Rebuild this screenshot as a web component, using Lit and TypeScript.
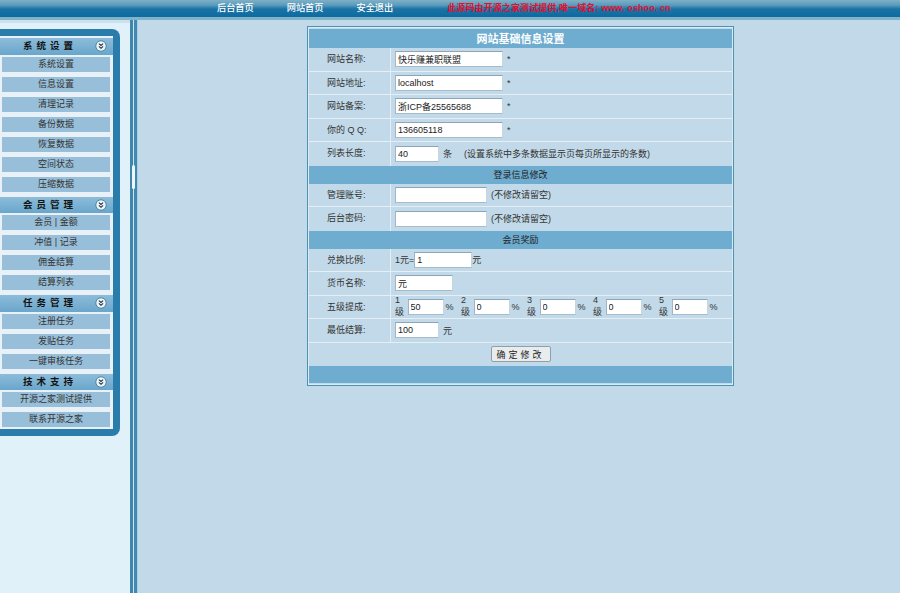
import { LitElement, html, css } from "lit";
import { customElement } from "lit/decorators.js";

const MENU: [string, string[]][] = [
  ["系统设置", ["系统设置", "信息设置", "清理记录", "备份数据", "恢复数据", "空间状态", "压缩数据"]],
  ["会员管理", ["会员 | 金额", "冲值 | 记录", "佣金结算", "结算列表"]],
  ["任务管理", ["注册任务", "发贴任务", "一键审核任务"]],
  ["技术支持", ["开源之家测试提供", "联系开源之家"]],
];

@customElement("app-root")
export class AppRoot extends LitElement {
  static styles = css`
    :host {
      display: flex;
      flex-direction: column;
      width: 900px;
      height: 593px;
      overflow: hidden;
      font-family: "Liberation Sans", "Noto Sans CJK SC", sans-serif;
      font-size: 9px;
      color: #222;
      background: #c1d9e8;
    }
    .top {
      height: 20px;
      flex: none;
      display: flex;
      align-items: flex-start;
      box-sizing: border-box;
      padding: 2px 0 0 217px;
      line-height: 12px;
      background: linear-gradient(#7fb0c6 0, #5c9cbc 5px, #1a73a6 9px, #0e6a9f 17px, #7fb4c8 17px, #7fb4c8 20px);
    }
    .top a {
      color: #fff;
      font-size: 9.2px;
      font-weight: 500;
      margin-right: 33px;
    }
    .top a:nth-child(2) { margin-right: 33px; }
    .top a:nth-child(3) { margin-right: 54px; }
    .top .notice {
      color: #e01030;
      font-weight: 700;
      font-size: 9px;
      letter-spacing: 0.1px;
    }
    .body { flex: 1; display: flex; min-height: 0; }
    .side {
      width: 130px;
      flex: none;
      box-sizing: border-box;
      background: #e1f1fa;
      border-top: 3px solid #cbe2ee;
      padding-top: 6px;
    }
    .panel {
      width: 120px;
      height: 407px;
      box-sizing: border-box;
      background: #2a7cab;
      border-radius: 0 8px 8px 0;
      padding: 7px 7px 7px 0;
    }
    .inner {
      background: #e8f1f8;
      height: 100%;
      padding-top: 2px;
      box-sizing: border-box;
    }
    .head {
      position: relative;
      height: 16.5px;
      margin-bottom: 2px;
      box-sizing: border-box;
      padding-right: 13px;
      background: linear-gradient(#8dbcd9, #69a6cb);
      font-weight: 700;
      font-size: 9.5px;
      line-height: 16px;
      letter-spacing: 4px;
      text-align: center;
      color: #111;
    }
    .head svg { position: absolute; right: 6px; top: 2px; }
    .item {
      width: 108px;
      height: 15px;
      margin: 0 0 5px 2px;
      background: #98bfd9;
      line-height: 15px;
      text-align: center;
      color: #333;
    }
    .split {
      width: 8px;
      flex: none;
      position: relative;
      box-sizing: border-box;
      background: linear-gradient(90deg, #3f86ab 0, #3f86ab 3px, #cfe4f0 3px, #cfe4f0 4px, #3f8ab2 4px, #3f8ab2 7px, #a9cde0 7px);
    }
    .handle {
      position: absolute;
      left: 2px;
      top: 145px;
      width: 3px;
      height: 24px;
      background: #eef6fb;
      border-radius: 2px;
    }
    .main { flex: 1; padding: 6px 0 0 169px; min-width: 0; }
    .form {
      width: 427px;
      height: 360px;
      box-sizing: border-box;
      border: 1px solid #4d93ad;
      padding: 2px 1px 2px 1px;
      background: #c1d9e8;
      box-shadow: inset 0 0 0 1px #dceaf2;
    }
    .title {
      height: 19px;
      background: #6eacd0;
      color: #fff;
      font-size: 11px;
      font-weight: 700;
      line-height: 20px;
      text-align: center;
    }
    .section {
      height: 18px;
      background: #6eacd0;
      line-height: 18px;
      text-align: center;
      color: #222;
    }
    .foot { height: 17px; background: #6eacd0; }
    .row {
      height: 23.5px;
      box-sizing: border-box;
      display: flex;
      border-bottom: 1px solid #e4f0f6;
    }
    .row.last { border-bottom: none; }
    .label {
      width: 82px;
      flex: none;
      box-sizing: border-box;
      padding-left: 18px;
      border-right: 1px solid #e4f0f6;
      line-height: 22px;
      color: #333;
    }
    .value {
      flex: 1;
      display: flex;
      align-items: center;
      padding-left: 4px;
      color: #333;
    }
    input {
      box-sizing: border-box;
      height: 16px;
      margin: 0;
      padding: 0 2px;
      background: #fff;
      border: 1px solid;
      border-color: #8aa6b8 #c4d6e2 #a7bccb #a0b6c6;
      font: 9px "Liberation Sans", "Noto Sans CJK SC", sans-serif;
      color: #222;
      outline: none;
    }
    .w108 { width: 108px; }
    .w92 { width: 92px; }
    .w58 { width: 58px; }
    .w44 { width: 44px; }
    .w36 { width: 36px; }
    .star { margin-left: 4px; }
    .after { margin-left: 4px; }
    .note { margin-left: 12px; }
    .lv { display: flex; align-items: center; width: 66px; }
    .lv span.n { width: 12.5px; }
    .lv span.p { margin-left: 2px; }
    .center { justify-content: center; padding: 0; }
    button {
      box-sizing: border-box;
      width: 60px;
      height: 16px;
      padding: 0;
      background: #e9eced;
      border: 1px solid #8f9ea8;
      border-radius: 2px;
      font: 9px "Liberation Sans", "Noto Sans CJK SC", sans-serif;
      letter-spacing: 3px;
      color: #222;
    }
  `;

  private icon() {
    return html`<svg width="12" height="12" viewBox="0 0 12 12">
      <circle cx="6" cy="6" r="5.2" fill="#eef5f8" stroke="#3f7f9f" stroke-width="0.9"></circle>
      <path d="M3.9 3.6 6 5.5 8.1 3.6M3.9 6.4 6 8.3 8.1 6.4" fill="none" stroke="#234" stroke-width="1.1"></path>
    </svg>`;
  }

  private row(label: string, value: unknown, last = false) {
    return html`<div class="row ${last ? "last" : ""}">
      <div class="label">${label}</div>
      <div class="value">${value}</div>
    </div>`;
  }

  render() {
    return html`
      <div class="top">
        <a>后台首页</a><a>网站首页</a><a>安全退出</a>
        <span class="notice">此源码由开源之家测试提供,唯一域名: www. oshoo. cn</span>
      </div>
      <div class="body">
        <div class="side">
          <div class="panel">
            <div class="inner">
              ${MENU.map(
                ([h, items]) => html`
                  <div class="head">${h}${this.icon()}</div>
                  ${items.map((i) => html`<div class="item">${i}</div>`)}
                `
              )}
            </div>
          </div>
        </div>
        <div class="split"><div class="handle"></div></div>
        <div class="main">
          <div class="form">
            <div class="title">网站基础信息设置</div>
            ${this.row("网站名称:", html`<input class="w108" value="快乐赚兼职联盟" /><span class="star">*</span>`)}
            ${this.row("网站地址:", html`<input class="w108" value="localhost" /><span class="star">*</span>`)}
            ${this.row("网站备案:", html`<input class="w108" value="浙ICP备25565688" /><span class="star">*</span>`)}
            ${this.row("你的 Q Q:", html`<input class="w108" value="136605118" /><span class="star">*</span>`)}
            ${this.row(
              "列表长度:",
              html`<input class="w44" value="40" /><span class="after">条</span><span class="note">(设置系统中多条数据显示页每页所显示的条数)</span>`,
              true
            )}
            <div class="section">登录信息修改</div>
            ${this.row("管理账号:", html`<input class="w92" /><span class="after">(不修改请留空)</span>`)}
            ${this.row("后台密码:", html`<input class="w92" /><span class="after">(不修改请留空)</span>`, true)}
            <div class="section">会员奖励</div>
            ${this.row("兑换比例:", html`<span>1元=</span><input class="w58" value="1" /><span>元</span>`)}
            ${this.row("货币名称:", html`<input class="w58" value="元" />`)}
            ${this.row(
              "五级提成:",
              html`${["50", "0", "0", "0", "0"].map(
                (v, i) => html`<div class="lv"><span class="n">${i + 1}级</span><input class="w36" value=${v} /><span class="p">%</span></div>`
              )}`
            )}
            ${this.row("最低结算:", html`<input class="w44" value="100" /><span class="after">元</span>`)}
            <div class="row last"><div class="value center"><button>确定修改</button></div></div>
            <div class="foot"></div>
          </div>
        </div>
      </div>
    `;
  }
}
